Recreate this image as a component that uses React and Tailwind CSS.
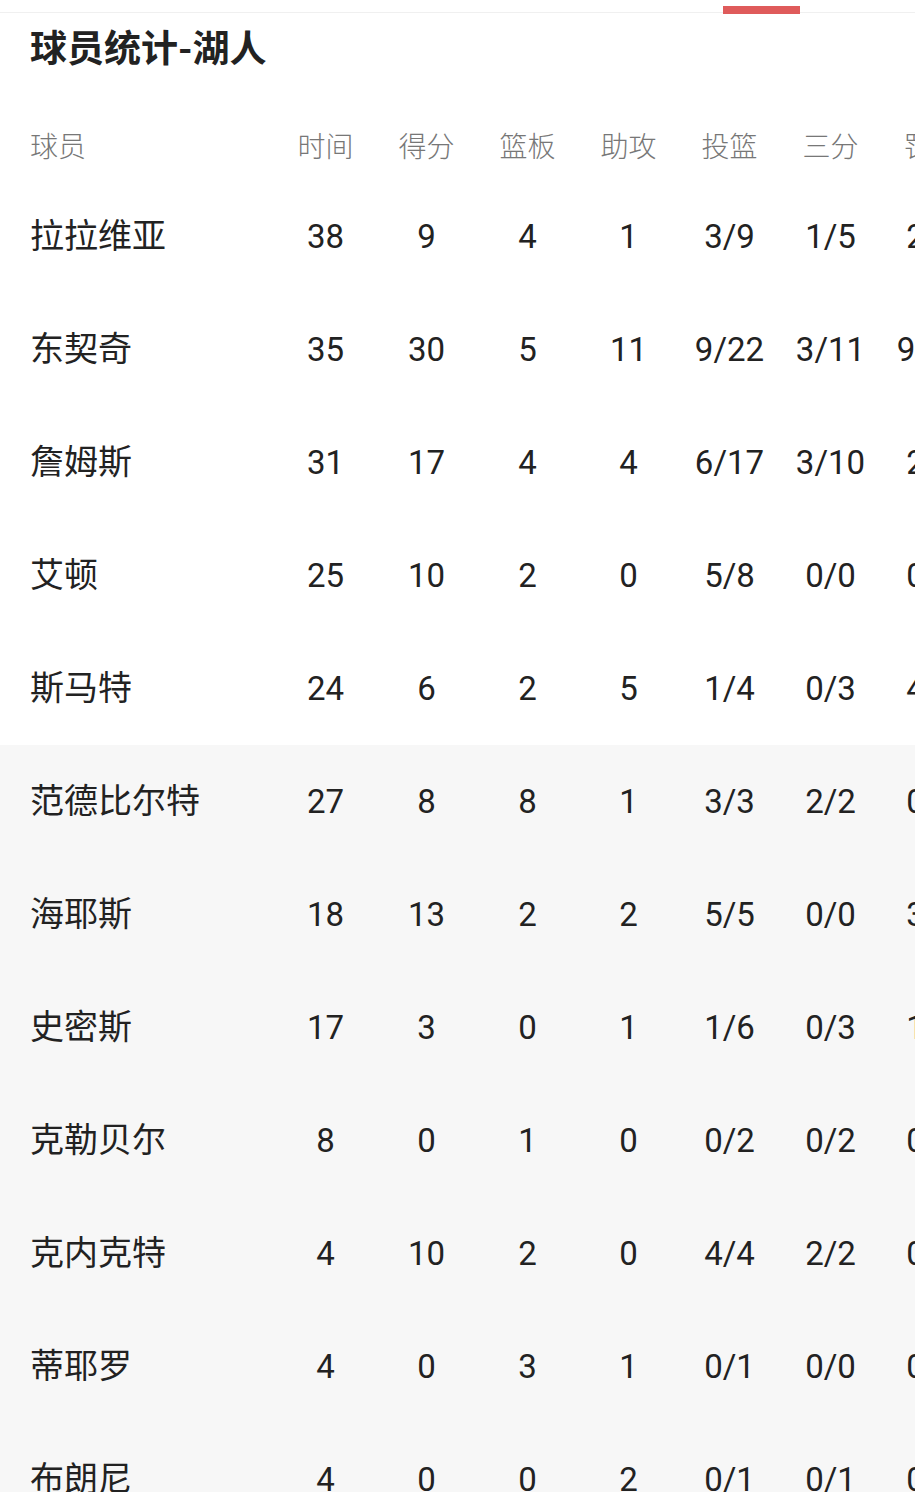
import React from 'react';

const players = [
    ['拉拉维亚', 38, 9, 4, 1, '3/9', '1/5', '2/2'],
    ['东契奇', 35, 30, 5, 11, '9/22', '3/11', '9/10'],
    ['詹姆斯', 31, 17, 4, 4, '6/17', '3/10', '2/2'],
    ['艾顿', 25, 10, 2, 0, '5/8', '0/0', '0/0'],
    ['斯马特', 24, 6, 2, 5, '1/4', '0/3', '4/4'],
    ['范德比尔特', 27, 8, 8, 1, '3/3', '2/2', '0/0'],
    ['海耶斯', 18, 13, 2, 2, '5/5', '0/0', '3/4'],
    ['史密斯', 17, 3, 0, 1, '1/6', '0/3', '1/2'],
    ['克勒贝尔', 8, 0, 1, 0, '0/2', '0/2', '0/0'],
    ['克内克特', 4, 10, 2, 0, '4/4', '2/2', '0/0'],
    ['蒂耶罗', 4, 0, 3, 1, '0/1', '0/0', '0/0'],
    ['布朗尼', 4, 0, 0, 2, '0/1', '0/1', '0/0'],
];

const headers = ['时间', '得分', '篮板', '助攻', '投篮', '三分', '罚球'];

const Row = ({ p }) => (
    <div className="flex items-center h-[113px] text-[#222] text-[33px]">
        <div className="w-[275px] shrink-0 pl-[30px] text-[34px]">{p[0]}</div>
        {p.slice(1).map((v, i) => (
            <div key={i} className="w-[101px] shrink-0 text-center">{v}</div>
        ))}
    </div>
);

const App = () => {
    const starters = players.slice(0, 5);
    const bench = players.slice(5);

    return (
        <div
            className="w-[915px] h-[1492px] overflow-hidden bg-white"
            style={{ fontFamily: 'Roboto, "Noto Sans CJK SC", sans-serif' }}
        >
            {/* tab strip */}
            <div className="relative h-[13px] border-b border-[#f0f0f0]">
                <div className="absolute left-[723px] top-[6px] w-[77px] h-[8px] bg-[#df5b5b]" />
            </div>

            <div className="h-[102px] pl-[30px] pt-[17px]">
                <h1 className="text-[37px] font-bold text-[#222] leading-[40px]">球员统计-湖人</h1>
            </div>

            <div className="flex items-center h-[65px] text-[28px] text-[#777] font-light">
                <div className="w-[275px] shrink-0 pl-[30px]">球员</div>
                {headers.map(h => (
                    <div key={h} className="w-[101px] shrink-0 text-center">{h}</div>
                ))}
            </div>

            <div>
                {starters.map(p => <Row key={p[0]} p={p} />)}
            </div>
            <div className="bg-[#f7f7f7]">
                {bench.map(p => <Row key={p[0]} p={p} />)}
            </div>
        </div>
    );
};

export default App;
